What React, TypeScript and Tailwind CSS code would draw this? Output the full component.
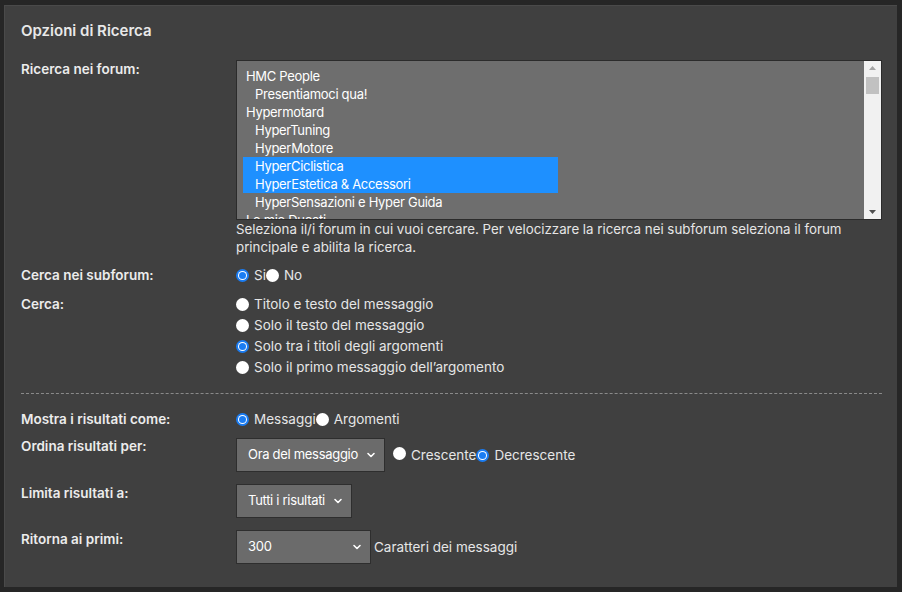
import React from "react";

const font = { fontFamily: "Inter, 'Open Sans', sans-serif" };

function Chevron() {
  return (
    <svg width="10" height="10" viewBox="0 0 10 10" className="shrink-0">
      <path d="M2 3.5 L5 6.5 L8 3.5" fill="none" stroke="#ffffff" strokeWidth="1.6" strokeLinecap="round" strokeLinejoin="round" />
    </svg>
  );
}

function Radio({ checked }: { checked?: boolean }) {
  return checked ? (
    <span className="inline-flex h-[13px] w-[13px] shrink-0 items-center justify-center rounded-full bg-[#1a7cf2]">
      <span className="flex h-[9px] w-[9px] items-center justify-center rounded-full bg-white">
        <span className="h-[7px] w-[7px] rounded-full bg-[#1a7cf2]" />
      </span>
    </span>
  ) : (
    <span className="inline-block h-[13px] w-[13px] shrink-0 rounded-full bg-white" />
  );
}

function Select({ text, w }: { text: string; w: string }) {
  return (
    <div className={`flex h-[34px] items-center justify-between border border-[#2e2e2e] bg-[#6b6b6b] pl-[11px] pr-[8px] text-[13px] tracking-[-0.3px] text-white ${w}`}>
      <span>{text}</span>
      <Chevron />
    </div>
  );
}

const items: { t: string; sub?: boolean; sel?: boolean }[] = [
  { t: "HMC People" },
  { t: "Presentiamoci qua!", sub: true },
  { t: "Hypermotard" },
  { t: "HyperTuning", sub: true },
  { t: "HyperMotore", sub: true },
  { t: "HyperCiclistica", sub: true, sel: true },
  { t: "HyperEstetica & Accessori", sub: true, sel: true },
  { t: "HyperSensazioni e Hyper Guida", sub: true },
  { t: "Le mie Ducati" },
];

export default function App() {
  return (
    <div className="min-h-[592px] w-[902px] bg-[#262626] pl-[4px] pt-[5px]" style={font}>
      <div className="h-[582px] w-[893px] border-l border-t border-[#4a4a4a] bg-[#404040] pl-[16px] pr-[15px] pt-[15px] text-[13.5px] text-[#e6e6e6]">
        <div className="text-[15px] font-semibold leading-[20px] text-[#e8e8e8]">Opzioni di Ricerca</div>

        <div className="mt-[19px] flex">
          <div className="w-[215px] font-semibold leading-[18px] text-[#ececec]">Ricerca nei forum:</div>
          <div className="flex-1">
            <div className="relative h-[160px] w-[646px] overflow-hidden border border-[#2b2b2b] bg-[#6e6e6e]">
              <div className="pl-[6px] pt-[6px]">
                {items.map((it, i) => (
                  <div
                    key={i}
                    className={`h-[18px] w-[315px] pl-[3px] text-[13px] leading-[18px] tracking-[-0.3px] text-white ${it.sel ? "bg-[#1e90ff]" : ""}`}
                  >
                    {it.sub ? <span className="pl-[9px]">{it.t}</span> : it.t}
                  </div>
                ))}
              </div>
              <div className="absolute right-0 top-0 flex h-full w-[17px] flex-col items-center bg-[#f1f1f1]">
                <svg width="17" height="14" viewBox="0 0 17 14">
                  <path d="M5 9 L8.5 5 L12 9 Z" fill="#a3a3a3" />
                </svg>
                <div className="mt-[2px] h-[17px] w-[13px] bg-[#c1c1c1]" />
                <div className="flex-1" />
                <svg width="17" height="14" viewBox="0 0 17 14">
                  <path d="M5 5 L8.5 9 L12 5 Z" fill="#505050" />
                </svg>
              </div>
            </div>
            <div className="w-[620px] text-[13.3px] leading-[18px] text-[#e6e6e6]">
              Seleziona il/i forum in cui vuoi cercare. Per velocizzare la ricerca nei subforum seleziona il forum principale e abilita la ricerca.
            </div>
          </div>
        </div>

        <div className="mt-[10px] flex h-[18px] items-center">
          <div className="w-[215px] font-semibold text-[#ececec]">Cerca nei subforum:</div>
          <div className="flex items-center">
            <Radio checked />
            <span className="ml-[5px]">Si</span>
            <Radio />
            <span className="ml-[5px]">No</span>
          </div>
        </div>

        <div className="mt-[10px] flex">
          <div className="w-[215px] font-semibold leading-[21px] text-[#ececec]">Cerca:</div>
          <div className="flex flex-col">
            {[
              ["Titolo e testo del messaggio", false],
              ["Solo il testo del messaggio", false],
              ["Solo tra i titoli degli argomenti", true],
              ["Solo il primo messaggio dell’argomento", false],
            ].map(([t, c], i) => (
              <div key={i} className="flex h-[21px] items-center">
                <Radio checked={c as boolean} />
                <span className="ml-[5px]">{t as string}</span>
              </div>
            ))}
          </div>
        </div>

        <div className="mt-[15px] border-t border-dashed border-[#8a8a8a]" />

        <div className="mt-[16px] flex h-[18px] items-center">
          <div className="w-[215px] font-semibold text-[#ececec]">Mostra i risultati come:</div>
          <div className="flex items-center">
            <Radio checked />
            <span className="ml-[5px]">Messaggi</span>
            <Radio />
            <span className="ml-[5px]">Argomenti</span>
          </div>
        </div>

        <div className="mt-[9px] flex">
          <div className="w-[215px] font-semibold leading-[18px] text-[#ececec]">Ordina risultati per:</div>
          <div className="mt-[1px] flex items-center">
            <Select text="Ora del messaggio" w="w-[149px]" />
            <span className="ml-[8px]"><Radio /></span>
            <span className="ml-[5px]">Crescente</span>
            <Radio checked />
            <span className="ml-[5px]">Decrescente</span>
          </div>
        </div>

        <div className="mt-[12px] flex">
          <div className="w-[215px] font-semibold leading-[18px] text-[#ececec]">Limita risultati a:</div>
          <Select text="Tutti i risultati" w="w-[116px]" />
        </div>

        <div className="mt-[12px] flex">
          <div className="w-[215px] font-semibold leading-[18px] text-[#ececec]">Ritorna ai primi:</div>
          <div className="flex items-center">
            <Select text="300" w="w-[135px]" />
            <span className="ml-[3px]">Caratteri dei messaggi</span>
          </div>
        </div>
      </div>
    </div>
  );
}
